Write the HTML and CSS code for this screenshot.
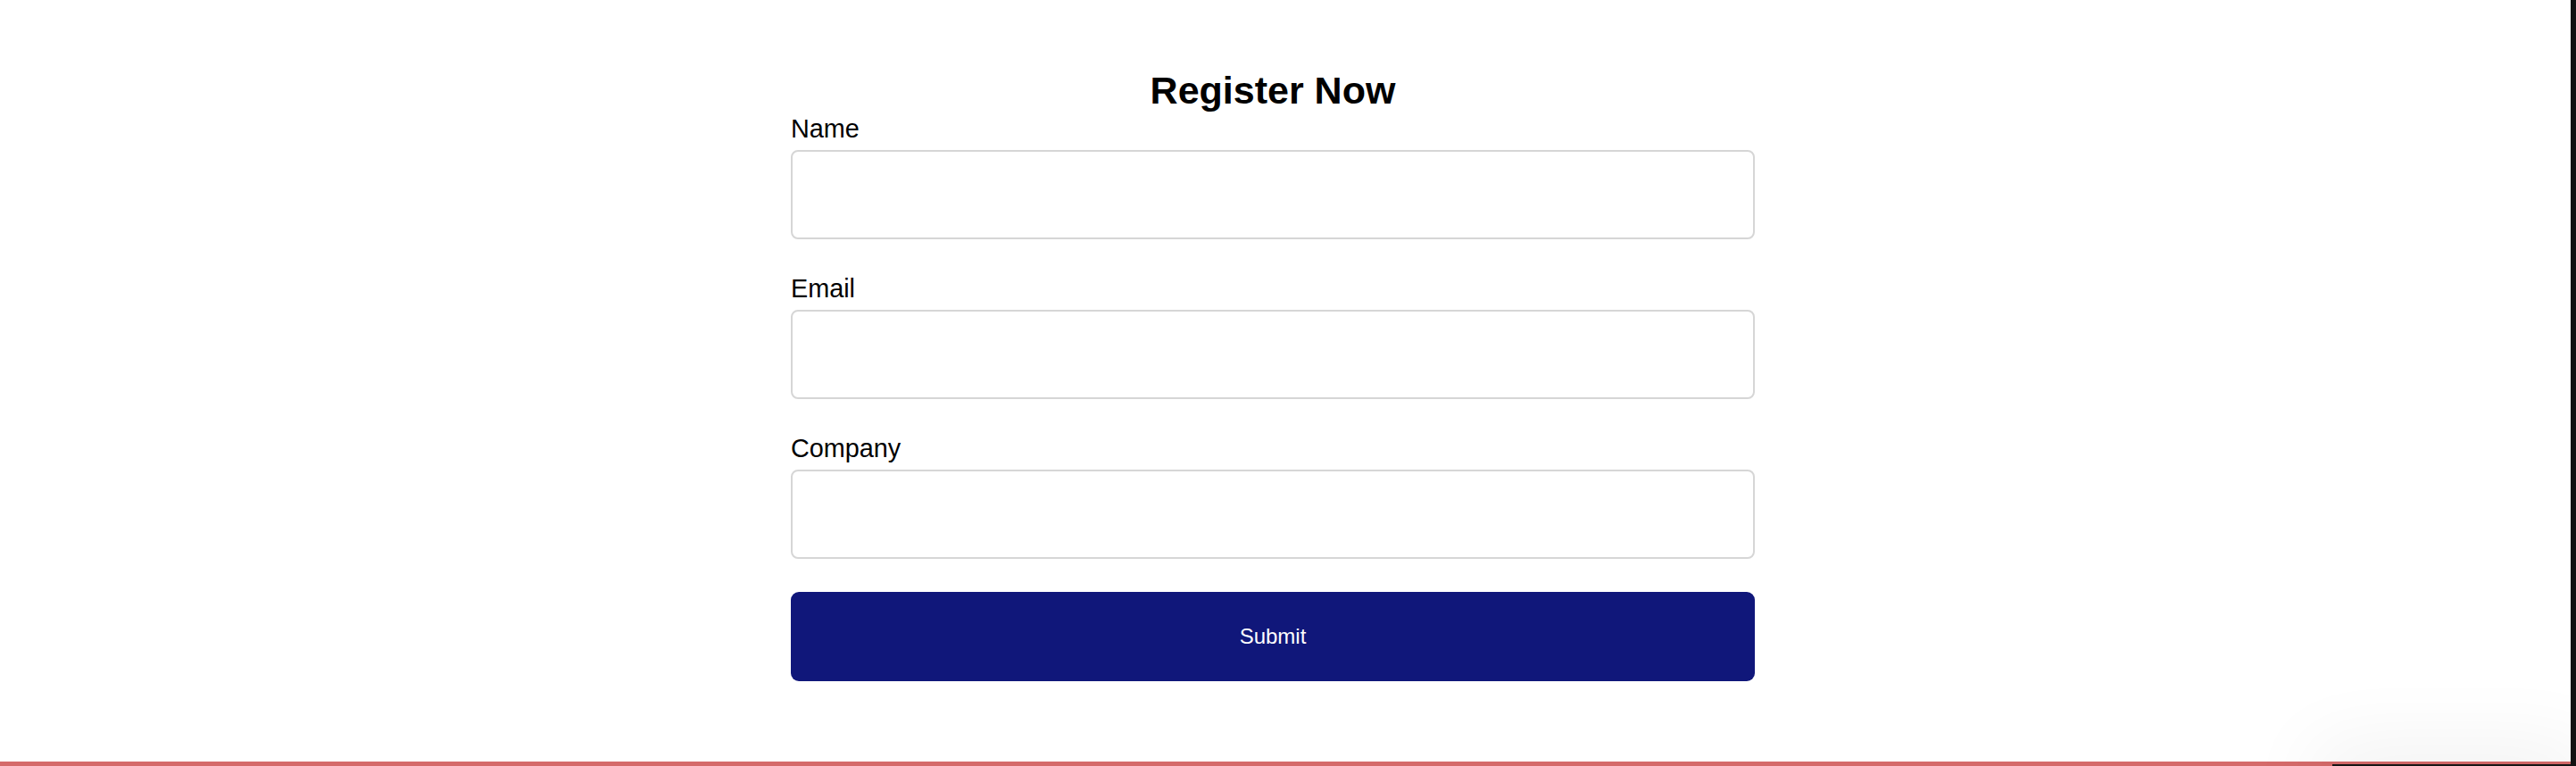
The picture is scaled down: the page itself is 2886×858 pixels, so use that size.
FILE: index.html
```html
<!DOCTYPE html>
<html lang="en">
<head>
<meta charset="utf-8">
<title>Register Now</title>
<link rel="stylesheet" href="styles.css">
</head>
<body>
<div class="page">
  <main class="content">
    <form class="register" onsubmit="return false">
      <h1 class="title">Register Now</h1>
      <label class="label" for="name">Name</label>
      <input class="field" id="name" type="text">
      <label class="label" for="email">Email</label>
      <input class="field" id="email" type="email">
      <label class="label" for="company">Company</label>
      <input class="field" id="company" type="text">
      <button class="submit" type="submit">Submit</button>
    </form>
  </main>
  <div class="redbar"></div>
  <div class="toast-shadow"></div>
</div>
<div class="edge"></div>
</body>
</html>
```

FILE: styles.css
```css
html, body {
  margin: 0;
  padding: 0;
  height: 858px;
  overflow: hidden;
  background: #ffffff;
}
body {
  display: flex;
  font-family: "Liberation Sans", Arial, sans-serif;
  color: #000;
}
.page {
  flex: 1;
  position: relative;
  display: flex;
  flex-direction: column;
  overflow: hidden;
}
.content {
  flex: 1;
  display: flex;
  justify-content: center;
  padding-right: 28px;
}
.register {
  width: 1080px;
  display: flex;
  flex-direction: column;
  padding-top: 76px;
}
.title {
  margin: 0 0 2px 0;
  font-size: 43px;
  font-weight: bold;
  text-align: center;
  line-height: 50px;
}
.label {
  display: block;
  font-size: 28.8px;
  line-height: 33px;
  margin-bottom: 7px;
}
.field {
  box-sizing: border-box;
  height: 100px;
  width: 100%;
  margin: 0 0 39px 0;
  border: 2px solid #d6d6d6;
  border-radius: 8px;
  background: #fff;
  font: inherit;
  padding: 0 18px;
}
.register .field:last-of-type {
  margin-bottom: 37px;
}
.submit {
  height: 100px;
  width: 100%;
  border: none;
  border-radius: 9px;
  background: #10177a;
  color: #ffffff;
  font-family: "Liberation Sans", Arial, sans-serif;
  font-size: 24px;
  cursor: pointer;
}
.redbar {
  height: 5px;
  background: #d56a6a;
}
.toast-shadow {
  position: absolute;
  left: 2613px;
  right: 0;
  top: 856px;
  height: 40px;
  background: #161616;
  box-shadow: 0 0 90px 20px rgba(0, 0, 0, 0.06);
}
.edge {
  width: 6px;
  flex: none;
  background: #121212;
}
```
